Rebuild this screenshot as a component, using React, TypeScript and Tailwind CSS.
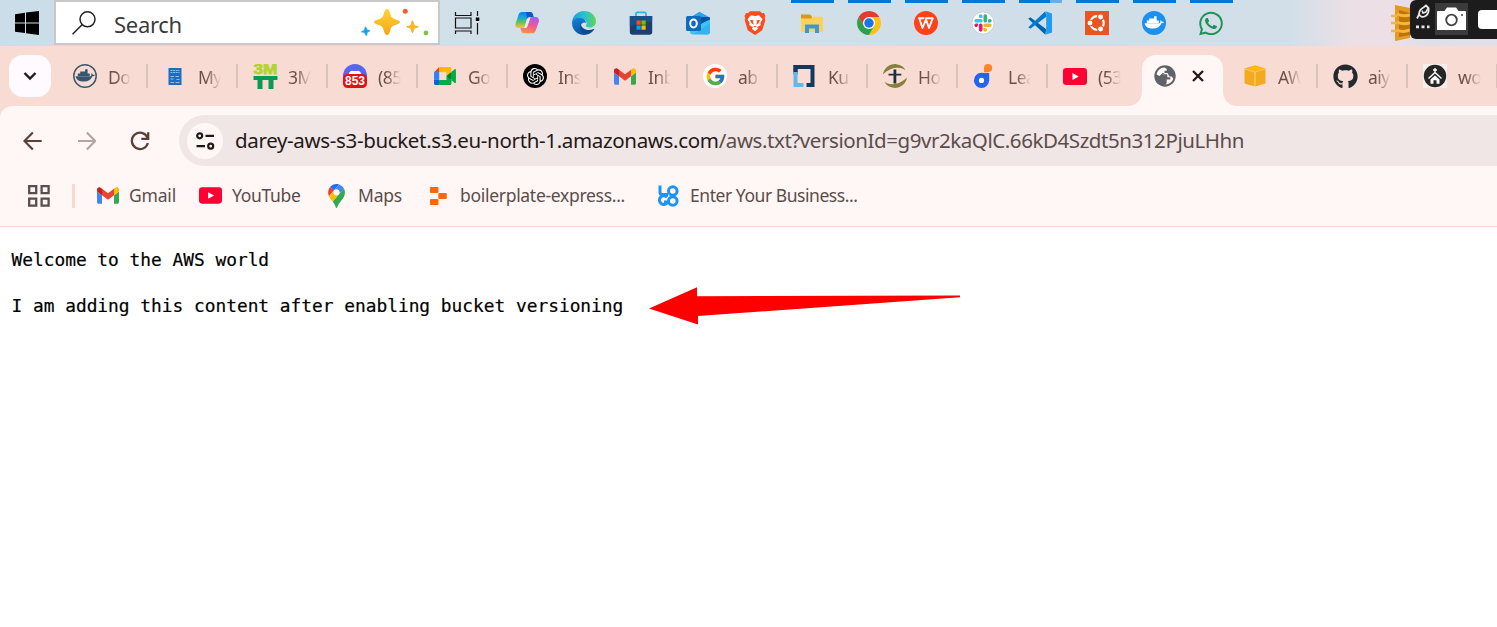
import React from "react";
import type { ReactNode } from "react";
import { FcGoogle } from "react-icons/fc";
import { FaGithub, FaWhatsapp } from "react-icons/fa";
import { SiOpenai } from "react-icons/si";

/* ---------- shared brand drawings ---------- */

function Gmail({ className }: { className: string }) {
  return (
    <svg viewBox="52 42 88 66" className={className}>
      <path fill="#4285f4" d="M58 108h14V74L52 59v43c0 3.32 2.69 6 6 6" />
      <path fill="#34a853" d="M120 108h14c3.32 0 6-2.69 6-6V59l-20 15" />
      <path fill="#fbbc04" d="M120 48v26l20-15v-8c0-7.42-8.47-11.65-14.4-7.2" />
      <path fill="#ea4335" d="M72 74V48l24 18 24-18v26L96 92" />
      <path fill="#c5221f" d="M52 51v8l20 15V48l-5.6-4.2c-5.94-4.45-14.4-.22-14.4 7.2" />
    </svg>
  );
}

function YouTube({ className }: { className: string }) {
  return (
    <svg viewBox="0 0 24 17" className={className}>
      <rect width="24" height="17" rx="3.2" fill="#ff0033" />
      <path d="M9.5 5v7l6.2-3.5z" fill="#fff" />
    </svg>
  );
}

function Whale({ fill }: { fill: string }) {
  return (
    <g fill={fill}>
      <path d="M2.600 12.200h15.200c.6-.3.7-1.6.2-2.6 1-.4 1.700.4 1.900 1.100.7-.1 1.400 0 2 .3-.4.800-1.300 1.300-2.500 1.300-1.300 3.400-4.200 5.300-8.300 5.300-4.900 0-7.900-1.800-8.500-5.400z" />
      <path d="M4.800 9.400h12v2.600h-12zM7.200 7.400h7.400v2.100H7.200zM12.100 5.300h2.500v2.200h-2.500z" />
    </g>
  );
}

/* ---------- taskbar icons ---------- */

const TaskView = () => (
  <svg viewBox="0 0 26 24" className="h-6 w-[26px]" fill="none" stroke="#111" strokeWidth="1.2">
    <path d="M1.500 1v3.500h15.500V1M1.500 7h15.500v10h-15.500zM1.500 23v-3h15.500v3M23.500 0v5M23.500 12v11.500" />
    <rect x="21.800" y="6.500" width="3.500" height="3.500" fill="#000" stroke="none" />
  </svg>
);

const Copilot = () => (
  <svg viewBox="0 0 24 24" className="h-6 w-6">
    <defs>
      <linearGradient id="cpA" x1="0.3" y1="0" x2="0.3" y2="1">
        <stop offset="0" stopColor="#0b7fe8" />
        <stop offset=".35" stopColor="#16a9d9" />
        <stop offset=".65" stopColor="#6fbf55" />
        <stop offset="1" stopColor="#f4c92d" />
      </linearGradient>
      <linearGradient id="cpB" x1="0.7" y1="0" x2="0.4" y2="1">
        <stop offset="0" stopColor="#a45cf0" />
        <stop offset=".5" stopColor="#ee5796" />
        <stop offset="1" stopColor="#fb9045" />
      </linearGradient>
    </defs>
    <path fill="url(#cpA)" d="M7 1h8c2 0 2.500 1 3 3l.6 2H15c-2 0-3 1-3.500 3l-1.600 6c-.5 1.500-1.200 2-2.500 2H3.500C.5 17 0 14.500.8 12L3.500 3.800C4.200 1.800 5 1 7 1z" />
    <path fill="#1755c4" d="M11 1h4c2 0 2.500 1 3 3l.6 2H15c-2 0-2.600 1-3 2z" />
    <path fill="url(#cpB)" d="M17 22.300H9c-2 0-2.500-1-3-3l-.7-2.300h3c2 0 2.700-1 3.200-3l1.700-6c.5-1.500 1.200-2 2.500-2h4.800c3 0 4 2.500 3.200 5l-3 8.500c-.7 2-1.700 2.800-3.700 2.800z" />
    <path fill="#e4edf2" d="M12.300 8.700c.8-1.900 1.900-2.600 3.400-2.600l-3.400 9.700c-.7 1.200-1.800 1.500-3.100 1.300z" />
  </svg>
);

const Edge = () => (
  <svg viewBox="0 0 24 24" className="h-6 w-6">
    <defs>
      <linearGradient id="edA" x1="0" y1="0.3" x2="1" y2="0.3">
        <stop offset="0" stopColor="#1b9de2" />
        <stop offset=".55" stopColor="#2cc3c9" />
        <stop offset="1" stopColor="#62d64c" />
      </linearGradient>
      <linearGradient id="edB" x1="0" y1="0" x2="0.3" y2="1">
        <stop offset="0" stopColor="#1583d8" />
        <stop offset="1" stopColor="#0c55a6" />
      </linearGradient>
    </defs>
    <path fill="url(#edA)" d="M0 11.500C.3 5 5.500 0 12 0c7 0 12 5 12 10.200 0 4-3 6.300-6.400 6.300-2.800 0-4.200-1-3.600-1.900 1.500-2 .8-6.600-5-6.600C4.500 8 1 9.500 0 11.500z" />
    <path fill="url(#edB)" d="M0 12c0-3 3.500-5 7-5 4.500 0 7 2.300 7 5-3-1.400-6 1.200-5.200 5 .6 2.800 2.700 5.500 5.700 6.700C6.700 25.200 0 19.600 0 12z" />
    <path fill="#0b4a8c" d="M8.800 12.500c-2.300 5 1 10.500 6 11.100 3-.5 5.700-2.300 7.400-5 .3-.6-.2-.8-.6-.6-6 2.800-12.600-.2-12.800-5.500z" />
  </svg>
);

const Store = () => (
  <svg viewBox="0 0 24 24" className="h-6 w-6">
    <path d="M7 6V2.800C7 1.600 7.500 1.300 8.400 1.300h7.200c.9 0 1.400.4 1.400 1.500V6" fill="none" stroke="#25b9ee" strokeWidth="1.800" />
    <path d="M.8 5h22.400v16c0 1.700-1 2.700-2.700 2.700h-17C1.800 23.700.8 22.700.8 21z" fill="#1d3f6e" />
    <path d="M.8 5h22.400v5L.8 15z" fill="#17568e" opacity=".8" />
    <path fill="#f25022" d="M7.500 9.500h4.200v4.200H7.500z" />
    <path fill="#7fba00" d="M12.500 9.500h4.200v4.200h-4.200z" />
    <path fill="#00a4ef" d="M7.500 14.500h4.200v4.200H7.500z" />
    <path fill="#ffb900" d="M12.500 14.500h4.200v4.200h-4.200z" />
  </svg>
);

const Outlook = () => (
  <svg viewBox="0 0 24 24" className="h-6 w-6">
    <path d="M5 6l8.500-5L23.500 6.500V14H5z" fill="#1b7fd6" />
    <path d="M8 4.500L13.500 1l8 4.500L14 12z" fill="#2aa4ea" />
    <path d="M12 14l12-8v9z" fill="#0a4a9e" />
    <path d="M4 15l9-1.500L24 8.500V21c0 1.500-1 2.500-2.500 2.500H7c-2 0-3-1-3-2.500z" fill="#38c6f4" />
    <path d="M15 6h8l-9 8z" fill="#0c4ea5" />
    <path d="M8 23l16-11v9c0 1.500-1 2.500-2.500 2.500z" fill="#33b4f0" />
    <rect x="0" y="5" width="15" height="15" rx="1.500" fill="#0f6cbd" />
    <ellipse cx="7.500" cy="12.500" rx="3.300" ry="3.900" fill="none" stroke="#fff" strokeWidth="2" />
  </svg>
);

const Explorer = () => (
  <svg viewBox="0 0 24 24" className="h-6 w-6">
    <path d="M1 3.500h9l2 2V9H1z" fill="#dc9a10" />
    <path d="M1 7.500h10l2-1.700h10V21H1z" fill="#fbd15b" />
    <path d="M5 22v-8.500h14V22h-4v-4.500H9V22z" fill="#3c97d6" />
  </svg>
);

const Chrome = () => (
  <svg viewBox="0 0 48 48" className="h-6 w-6">
    <path fill="#e23b30" d="M24 12H44.780A24 24 0 0 0 3.220 12L13.610 30L24 24Z" />
    <path fill="#fbc116" d="M34.390 30L24 48A24 24 0 0 0 44.780 12H24V24Z" />
    <path fill="#2da14c" d="M13.610 30L3.220 12A24 24 0 0 0 24 48L34.390 30L24 24Z" />
    <circle cx="24" cy="24" r="12" fill="#fff" />
    <circle cx="24" cy="24" r="9.500" fill="#1a73e8" />
  </svg>
);

const Wps = () => (
  <svg viewBox="0 0 24 24" className="h-6 w-6">
    <circle cx="12" cy="12" r="12" fill="#ff4218" />
    <path d="M4.300 7.300h6M5.300 7.300l3.200 9.700 3.500-8.500 3 8.500 3.700-9.700h-7.400" fill="none" stroke="#fff" strokeWidth="1.900" strokeLinejoin="round" />
  </svg>
);

const slackArm =
  "M25.800 77.600c0 7.100-5.800 12.900-12.900 12.900S0 84.700 0 77.600s5.800-12.900 12.900-12.900h12.900v12.900zm6.500 0c0-7.100 5.800-12.900 12.900-12.900s12.900 5.800 12.900 12.900v32.300c0 7.100-5.800 12.900-12.900 12.900s-12.900-5.800-12.900-12.900V77.600z";

const Slack = () => (
  <svg viewBox="-24 -24 170.800 170.800" className="h-6 w-6">
    <circle cx="61.400" cy="61.400" r="79" fill="#fff" stroke="#b9c3c9" strokeWidth="5" />
    <path fill="#e01e5a" d={slackArm} />
    <path fill="#36c5f0" d={slackArm} transform="rotate(90 61.400 61.400)" />
    <path fill="#2eb67d" d={slackArm} transform="rotate(180 61.400 61.400)" />
    <path fill="#ecb22e" d={slackArm} transform="rotate(270 61.400 61.400)" />
  </svg>
);

const VsCode = () => (
  <svg viewBox="0 0 24 24" className="h-6 w-6">
    <path d="M.3 7.800l2-1.500 16 12-1 5.500z" fill="#0065a9" />
    <path d="M.3 16.200l2 1.500L18.500 5.500 17.300.2z" fill="#007acc" />
    <path d="M17.300.2L24 2.600v18.800l-6.700 2.400c.5-.3.900-.8.900-1.500V1.700c0-.7-.4-1.200-.9-1.500z" fill="#1f9cf0" />
  </svg>
);

const Ubuntu = () => (
  <svg viewBox="0 0 24 24" className="h-6 w-6">
    <path d="M0 0h24v24H0z" fill="#e95420" />
    <circle cx="12" cy="12" r="6.800" fill="none" stroke="#fff" strokeWidth="2.200" />
    <g fill="#fff" stroke="#e95420" strokeWidth="1.100">
      <circle cx="5" cy="12" r="3" />
      <circle cx="15.600" cy="6" r="3" />
      <circle cx="15.600" cy="18" r="3" />
    </g>
  </svg>
);

const DockerApp = () => (
  <svg viewBox="0 0 24 24" className="h-6 w-6">
    <circle cx="12" cy="12" r="12" fill="#1d90ed" />
    <Whale fill="#fff" />
  </svg>
);

const Brave = () => (
  <svg viewBox="0 0 24 24" className="h-6 w-6">
    <path fill="#ff4a1c" d="M7 .3h10l2 2 2-.2 1.500 3-.8 2 .6 2-3 10.200L12 24l-7.300-4.700-3-10.200.6-2-.8-2L3 2.100l2 .2z" />
    <path fill="#fff" d="M8 4.300l4 .8 4-.8 3.500 4-2.200 4 .5 1.800-3.700 2.200 1 1.500-3.100 2.400-3.100-2.400 1-1.500-3.700-2.200.5-1.800-2.200-4z" />
    <path fill="#ff4a1c" d="M7 8.700l3.600.7-.6 1.600.8 2.800-2.300-1.500zM17 8.700l-3.600.7.6 1.600-.8 2.800 2.300-1.500zM10 15h4l-2 1.300z" />
  </svg>
);

type TaskItem = { icon: ReactNode; bar?: "solid" | "split" };

const taskItems: TaskItem[] = [
  { icon: <Copilot /> },
  { icon: <Edge /> },
  { icon: <Store /> },
  { icon: <Outlook /> },
  { icon: <Brave /> },
  { icon: <Explorer />, bar: "solid" },
  { icon: <Chrome />, bar: "solid" },
  { icon: <Wps />, bar: "solid" },
  { icon: <Slack />, bar: "solid" },
  { icon: <VsCode />, bar: "split" },
  { icon: <Ubuntu />, bar: "solid" },
  { icon: <DockerApp />, bar: "solid" },
  { icon: <FaWhatsapp className="size-[27px] text-[#1f9257]" />, bar: "solid" },
];

function Taskbar() {
  return (
    <div className="flex h-[46px] bg-[linear-gradient(90deg,#cbdde8_0px,#d2e0e8_500px,#cfdee8_1000px,#d2dfe9_1290px,#ecdfe6_1350px,#ecdfe6_1390px,#dfdfea_1430px,#e3dfe9_1497px)]">
      <div className="flex w-[54px] shrink-0 items-center">
        <svg viewBox="0 0 24 24" className="ml-[15px] h-6 w-6">
          <path d="M0 3.300l10-1.500v9.600H0zM11 1.600L24 0v11.400H11zM0 12.500h10v9.600L0 20.700zM11 12.500h13V24l-13-1.700z" fill="#000" />
        </svg>
      </div>
      <div className="flex h-[45px] w-[386px] shrink-0 items-center border-2 border-[#c9c9c9] bg-white">
        <svg viewBox="0 0 24 24" className="ml-4 h-6 w-6" fill="none" stroke="#222" strokeWidth="1.500">
          <circle cx="15.500" cy="8.300" r="7.500" />
          <path d="M10 13.700L.5 23.300" />
        </svg>
        <span className="ml-[18px] mt-[3px] w-[246px] text-[22px] tracking-[-0.300px] text-[#3b3b3b]">Search</span>
        <svg viewBox="0 0 70 28" className="-mt-[2px] h-7 w-[70px]">
          <defs>
            <linearGradient id="star" x1="0" y1="0" x2="0" y2="1">
              <stop offset="0" stopColor="#ffd43a" />
              <stop offset="1" stopColor="#f3a712" />
            </linearGradient>
          </defs>
          <path d="M27 1c1.500 0 2.500 1.500 3.200 4.500.8 3.400 1.800 4.700 4.900 5.700 3.600 1.100 5 1.800 5 2.900s-1.400 1.800-5 2.900c-3.100 1-4.100 2.200-4.900 5.600C29.500 25.600 28.500 27 27 27s-2.500-1.400-3.200-4.400c-.8-3.400-1.800-4.600-4.900-5.600-3.600-1.100-5-1.800-5-2.900s1.400-1.800 5-2.900c3.100-1 4.100-2.300 4.900-5.700C24.500 2.500 25.500 1 27 1z" fill="url(#star)" />
          <path d="M52.500 12.300c1 0 1.500 4 2.200 4.700s4.200 1 4.200 1.800-3.500 1.200-4.200 1.900-1.200 4.300-2.200 4.300-1.500-3.600-2.200-4.300-4.200-1.100-4.200-1.900 3.500-1.100 4.200-1.800 1.200-4.700 2.200-4.700z" fill="#f8b72b" />
          <path d="M5.500 19c1-.3 1.300 2.600 2 3s2.500-.2 2.500.7-2.200 1-2.600 1.700-.2 3.200-1 3.300-1.300-2.500-2-3-2.900.1-3-.8 2.300-1 2.800-1.700.4-3 1.300-3.200z" fill="#16a3e8" stroke="#16a3e8" strokeWidth=".5" />
          <circle cx="45.300" cy="3.200" r="2.500" fill="#f0622d" />
          <circle cx="66" cy="25" r="2.400" fill="#84c341" />
        </svg>
      </div>
      <div className="flex w-[58px] shrink-0 items-center pl-[14px]">
        <TaskView />
      </div>
      {taskItems.map((item, i) => (
        <div key={i} className="flex w-[57px] shrink-0 flex-col items-center">
          <div className="ml-px flex h-[3px] w-[43px]">
            {item.bar === "solid" && <div className="w-full bg-[#0078d7]" />}
            {item.bar === "split" && (
              <>
                <div className="w-[31px] bg-[#0078d7]" />
                <div className="w-3 bg-[#6aaee8]" />
              </>
            )}
          </div>
          <div className="mt-[7px] flex h-[26px] w-6 items-center justify-center">{item.icon}</div>
        </div>
      ))}
      <div className="flex w-[258px] shrink-0 justify-end">
        <svg viewBox="0 0 20 36" className="mt-[5px] h-9 w-5">
          <path d="M5 0l15 3v30L5 36z" fill="#e79a22" />
          <path d="M9 5l11 3v22L9 32z" fill="#bd7409" />
          <path d="M1 11h6M1 18h6M1 26h6" stroke="#efb743" strokeWidth="2.500" />
          <path d="M7 9q6 3 13 1M7 17q6 3 13 1M7 25q6 3 13 0" fill="none" stroke="#f3b839" strokeWidth="3" />
        </svg>
        <div className="flex h-[39px] w-[87px] shrink-0 rounded-l-md bg-[#1c1c1c]">
          <svg viewBox="0 0 20 28" className="ml-[5px] mt-[3px] h-7 w-5" fill="none" stroke="#e8e8e8">
            <path d="M2 15.500l2.500-5" strokeWidth="1.800" />
            <path d="M11 2.500l2.500 2.500c1 3-.5 7-4 8.500-2 .8-4.500 0-5.300-2C3.500 8.500 6 5.500 8.500 4.500z" strokeWidth="1.800" />
            <path d="M7 7.500l1 2.500 3-1 2.500-4.500" strokeWidth="1.600" />
            <path d="M1 23.800h3M6.500 23.800h3M12 23.800h2.500" strokeWidth="2.800" />
          </svg>
          <div className="mt-[3px] flex h-8 w-[33px] items-center justify-center bg-[#3b3b3b]">
            <svg viewBox="0 0 29 24" className="h-6 w-[29px]">
              <path d="M1 4h6.500l2.500-3.500h9L21.500 4H28a1 1 0 011 1v18H0V5a1 1 0 011-1z" fill="#fff" />
              <circle cx="14.500" cy="13" r="5.300" fill="none" stroke="#444" strokeWidth="1.800" />
              <circle cx="25" cy="8" r="1" fill="#444" />
            </svg>
          </div>
          <div className="ml-[10px] mt-[10px] h-[19px] w-[19px] rounded-l-sm bg-white" />
        </div>
      </div>
    </div>
  );
}

/* ---------- tab favicons ---------- */

const DockerTab = () => (
  <svg viewBox="0 0 24 24" className="h-6 w-6">
    <circle cx="12" cy="12" r="11.200" fill="none" stroke="#3d586b" strokeWidth="1.500" />
    <Whale fill="#35566f" />
  </svg>
);

const BlueDoc = () => (
  <svg viewBox="0 0 24 24" className="h-6 w-6">
    <path d="M5.500 4h13v17h-13z" fill="#1f6dbf" />
    <path d="M7.500 6.500h9M7.500 8.500h9" stroke="#8cc0ec" strokeWidth="1.200" strokeDasharray="2 .6" />
    <path d="M7.500 12.500h3.500M7.500 15h3M7.500 18.500h3.500M12.500 12.500h3.500M13.500 15.500h3M12.500 18.500h4" stroke="#8cc0ec" strokeWidth="1" />
  </svg>
);

const ThreeM = () => (
  <svg viewBox="0 0 25 25" className="h-[25px] w-[25px]">
    <text x="12.500" y="10.300" textAnchor="middle" textLength="24" lengthAdjust="spacingAndGlyphs" fontSize="14" fontWeight="900" fontFamily="Liberation Sans, sans-serif" fill="#b4d334" stroke="#b4d334" strokeWidth=".8">
      3M
    </text>
    <path d="M.5 12h24v4h-4v9h-5v-9h-6v9h-5v-9h-4z" fill="#0b9b50" />
  </svg>
);

const Notify853 = () => (
  <svg viewBox="0 0 26 26" className="h-[26px] w-[26px]">
    <circle cx="13" cy="13" r="12" fill="#5865f2" />
    <path d="M7 10q2-3 4-2h4q2-1 4 2v4H7z" fill="#fff" />
    <rect x="1" y="11" width="24" height="14" rx="4.500" fill="#e60f16" />
    <text x="13" y="22.300" textAnchor="middle" fontSize="12" fontWeight="700" fontFamily="Liberation Sans, sans-serif" fill="#fff">
      853
    </text>
  </svg>
);

const Meet = () => (
  <svg viewBox="0 0 87.500 72" className="h-[18px] w-[22px]">
    <path fill="#00832d" d="M49.500 36l8.530 9.750 11.470 7.330 2-17.020-2-16.640-11.690 6.440z" />
    <path fill="#0066da" d="M0 51.500V66c0 3.315 2.685 6 6 6h14.500l3-10.960-3-9.540-9.950-3z" />
    <path fill="#e94235" d="M20.500 0L0 20.500l10.550 3 9.950-3 2.950-9.410z" />
    <path fill="#2684fc" d="M20.500 20.500H0v31h20.500z" />
    <path fill="#00ac47" d="M82.600 8.680L69.500 19.420v33.660l13.160 10.790c1.970 1.540 4.850.135 4.850-2.370V11c0-2.535-2.945-3.925-4.910-2.320zM49.500 36v15.500h-29V72h43c3.315 0 6-2.685 6-6V53.080z" />
    <path fill="#ffba00" d="M63.500 0h-43v20.500h29V36l20-16.570V6c0-3.315-2.685-6-6-6z" />
  </svg>
);

const OpenAi = () => (
  <span className="flex size-6 items-center justify-center rounded-full bg-black">
    <SiOpenai className="size-[17px] text-white" />
  </span>
);

const GoogleTab = () => (
  <span className="flex size-6 items-center justify-center rounded-full bg-white">
    <FcGoogle className="size-[21px]" />
  </span>
);

const LinuxFoundation = () => (
  <svg viewBox="0 0 24 24" className="h-6 w-6">
    <path d="M.5 1h21v22h-8v-4h4V5h-13v5.500h-4z" fill="#123a60" />
    <path d="M.5 8h4v11h6v4H.5z" fill="#62b8ea" />
    <path d="M.5 1h10v4h-6v3h-4z" fill="#123a60" />
  </svg>
);

const Cross = () => (
  <svg viewBox="0 0 26 26" className="h-[26px] w-[26px]">
    <path d="M1 11.500C2 4.500 8.500.5 14.500 1.200c4.500.5 7.500 3 9 6C19.500 3.800 9.500 3 1 11.500z" fill="#85803b" />
    <path d="M25 14.500c-1 7-7.500 11-13.500 10.300-4.500-.5-7.500-3-9-6 4 3.400 14 4.200 22.500-4.300z" fill="#85803b" />
    <path d="M11.500 6.500h2.800v4.300h5v1.700h-5V20.500h-2.800v-8h-5v-1.700h5z" fill="#1f2d3f" />
  </svg>
);

const Drop = () => (
  <svg viewBox="0 0 24 24" className="h-6 w-6">
    <path d="M8.500 9h7.700v7.500H8.500z" fill="#2563f5" />
    <circle cx="8.500" cy="16.400" r="7.600" fill="#2563f5" />
    <circle cx="8.500" cy="16.400" r="2.600" fill="#fff" />
    <path d="M11 8.200V4.100a4.100 4.100 0 1 1 4.100 4.100z" fill="#ff8328" />
  </svg>
);

const Globe = () => (
  <svg viewBox="0 0 22 22" className="size-[22px]">
    <circle cx="11" cy="11" r="10.700" fill="#5f6368" />
    <path d="M2.600 9.500C3.300 5.500 6.500 2.700 10.500 2.500L12.700 4v1.800h-2.200v2.400L8.300 9.300h5v3h3v2.300h-3.600v3.300l-1.300 1.600c3.700-.1 6.700-2.400 7.900-5.700l-1.500-2.300h-2.300l-2-3.500h-5l-3 3z" fill="#fff7f5" />
  </svg>
);

const AwsCube = () => (
  <svg viewBox="0 0 24 24" className="h-6 w-6">
    <path d="M1.500 4.500L12 1.500l10.500 3v15L12 22.500l-10.500-3z" fill="#f4aa20" />
    <path d="M1.500 4.500L12 7.500l10.500-3L12 1.500z" fill="#fdb813" />
    <path d="M12 8v14.500" fill="none" stroke="#fbd87a" strokeWidth="1" />
    <path d="M1.500 5L12 8l10.500-3" fill="none" stroke="#fbd87a" strokeWidth=".7" />
  </svg>
);

const Church = () => (
  <svg viewBox="0 0 24 24" className="h-6 w-6">
    <path d="M0 0h24v24H0z" fill="#f4efed" />
    <circle cx="12" cy="12" r="11.200" fill="#262626" />
    <path d="M12 4v5M10 6h4M5.500 14.500l6.500-6 6.500 6" fill="none" stroke="#fff" strokeWidth="1.400" />
    <path d="M7.500 15.500L12 11.500l4.500 4v4.300h-3v-3.500h-3v3.500h-3z" fill="#fff" />
  </svg>
);

type TabItem = { icon: ReactNode; label: string };

const leftTabs: TabItem[] = [
  { icon: <DockerTab />, label: "Do" },
  { icon: <BlueDoc />, label: "My" },
  { icon: <ThreeM />, label: "3M" },
  { icon: <Notify853 />, label: "(85" },
  { icon: <Meet />, label: "Go" },
  { icon: <OpenAi />, label: "Ins" },
  { icon: <Gmail className="h-[17px] w-[22px]" />, label: "Inb" },
  { icon: <GoogleTab />, label: "ab" },
  { icon: <LinuxFoundation />, label: "Ku" },
  { icon: <Cross />, label: "Ho" },
  { icon: <Drop />, label: "Lea" },
  { icon: <YouTube className="h-[17px] w-6" />, label: "(53" },
];

const rightTabs: TabItem[] = [
  { icon: <AwsCube />, label: "AW" },
  { icon: <FaGithub className="size-[25px] text-[#24292f]" />, label: "aiy" },
  { icon: <Church />, label: "wo" },
];

function Tab({ item, divider }: { item: TabItem; divider: boolean }) {
  return (
    <div className="flex h-[60px] w-[90px] shrink-0 items-center">
      <div className="ml-[14px] flex w-[26px] shrink-0 items-center justify-center">{item.icon}</div>
      <div className="ml-[10px] mt-[3px] w-[32px] shrink-0 whitespace-nowrap text-[17.500px] tracking-[-0.500px] text-[#6b4f49] [mask-image:linear-gradient(90deg,#000_8px,transparent_23px)]">
        {item.label}
      </div>
      {divider && <div className="ml-[6px] h-6 w-0.5 shrink-0 bg-[#d8c3bd]" />}
    </div>
  );
}

function TabStrip() {
  return (
    <div className="flex h-[60px] overflow-hidden bg-[#f8dcd3]">
      <div className="w-[58px] shrink-0 pl-[9px] pt-[9px]">
        <div className="flex size-[42px] items-center justify-center rounded-[14px] bg-[#fffaff]">
          <svg viewBox="0 0 14 10" className="h-[10px] w-[14px]" fill="none" stroke="#231918" strokeWidth="2.400">
            <path d="M1.500 2L7 7.500 12.500 2" />
          </svg>
        </div>
      </div>
      {leftTabs.map((t, i) => (
        <Tab key={t.label} item={t} divider={i < 11} />
      ))}
      <div className="flex w-[90px] shrink-0 items-end">
        <svg viewBox="0 0 14 14" className="-ml-[10px] h-[14px] w-[14px] shrink-0">
          <path d="M14 0v14H0A14 14 0 0 0 14 0z" fill="#fff7f5" />
        </svg>
        <div className="flex h-[51px] w-[81px] shrink-0 items-start rounded-t-[14px] bg-[#fff7f5] pt-[10px]">
          <div className="ml-3">
            <Globe />
          </div>
          <svg viewBox="0 0 14 14" className="ml-[15px] mt-1 h-[14px] w-[14px]" stroke="#231918" strokeWidth="2.300">
            <path d="M2 2l10 10M12 2L2 12" />
          </svg>
        </div>
        <svg viewBox="0 0 14 14" className="-mr-[10px] h-[14px] w-[14px] shrink-0">
          <path d="M0 0v14h14A14 14 0 0 1 0 0z" fill="#fff7f5" />
        </svg>
      </div>
      {rightTabs.map((t) => (
        <Tab key={t.label} item={t} divider />
      ))}
    </div>
  );
}

/* ---------- toolbar, bookmarks, page ---------- */

function Toolbar() {
  return (
    <div className="bg-[#f8dcd3]">
      <div className="flex h-[69px] items-center rounded-tl-[12px] bg-[#fff7f5]">
        <svg viewBox="0 0 20 20" className="ml-[23px] size-5" fill="none" stroke="#5b403a" strokeWidth="2.200">
          <path d="M19 10H2M10 1.300L1.500 10l8.500 8.700" />
        </svg>
        <svg viewBox="0 0 20 20" className="ml-[34px] size-5" fill="none" stroke="#b5a5a2" strokeWidth="2.200">
          <path d="M1 10h17M10 1.300l8.500 8.700-8.500 8.700" />
        </svg>
        <svg viewBox="0 0 20 20" className="ml-[34px] size-5" fill="none" stroke="#5b403a" strokeWidth="2.300">
          <path d="M17.800 6.500A8.300 8.300 0 1 0 18.200 12M18.500 1v6.800h-7" />
        </svg>
        <div className="ml-[29px] flex h-[51px] w-[1340px] items-center overflow-hidden rounded-l-full bg-[#f1e6e6] pl-2">
          <div className="flex size-9 shrink-0 items-center justify-center rounded-full bg-[#fff7f5]">
            <svg viewBox="0 0 20 18" className="h-[18px] w-5" fill="none" stroke="#231918" strokeWidth="2.200">
              <circle cx="4.700" cy="3.800" r="2.500" />
              <path d="M10.500 3.800h8.500M1.500 14.200h8.500" />
              <circle cx="15.700" cy="14.200" r="2.500" />
            </svg>
          </div>
          <div className="ml-3 whitespace-nowrap text-[20.500px] text-[#5b4d4b]">
            <span className="tracking-[-0.340px] text-[#231918]">darey-aws-s3-bucket.s3.eu-north-1.amazonaws.com</span>
            <span className="tracking-[-0.430px]">/aws.txt?versionId=g9vr2kaQlC.66kD4Szdt5n312PjuLHhn</span>
          </div>
        </div>
      </div>
    </div>
  );
}

function Bookmark({ icon, label, className }: { icon: ReactNode; label: string; className: string }) {
  return (
    <div className={`flex shrink-0 items-center whitespace-nowrap text-[17.500px] text-[#5b4d4b] ${className}`}>
      {icon}
      <span>{label}</span>
    </div>
  );
}

function Bookmarks() {
  return (
    <div className="flex h-[52px] items-center border-b border-[#f8dcd3] bg-[#fff7f5] pb-[10px]">
      <svg viewBox="0 0 22 22" className="ml-7 size-[22px]" fill="none" stroke="#5b4d4b" strokeWidth="2.300">
        <path d="M1.200 1.200h7v7h-7zM13.600 1.200h7v7h-7zM1.200 13.600h7v7h-7zM13.600 13.600h7v7h-7z" />
      </svg>
      <div className="ml-[22px] h-6 w-[3px] bg-[#fcd8ce]" />
      <Bookmark className="ml-[22px] w-[102px] gap-[10px] tracking-[-0.200px]" icon={<Gmail className="h-[17px] w-[22px]" />} label="Gmail" />
      <Bookmark className="w-[129px] gap-[10px] tracking-[-0.300px]" icon={<YouTube className="h-[17px] w-[23px]" />} label="YouTube" />
      <Bookmark
        className="w-[102px] gap-[13px] tracking-[-0.200px]"
        icon={
          <svg viewBox="0 0 92.300 132.300" className="h-6 w-[17px]">
            <path fill="#1a73e8" d="M60.200 2.200C55.800.8 51 0 46.100 0 32 0 19.300 6.400 10.800 16.500l21.800 18.300L60.200 2.200z" />
            <path fill="#ea4335" d="M10.800 16.500C4.100 24.500 0 34.900 0 46.100c0 8.700 1.700 15.700 4.600 22l28-33.300-21.800-18.300z" />
            <path fill="#4285f4" d="M46.200 28.500c9.800 0 17.700 7.900 17.700 17.700 0 4.300-1.600 8.300-4.200 11.400 0 0 13.900-16.600 27.500-32.700-5.600-10.800-15.300-19-27-22.700L32.600 34.800c3.300-3.800 8.100-6.300 13.600-6.300" />
            <path fill="#fbbc04" d="M46.200 63.800c-9.800 0-17.700-7.900-17.700-17.700 0-4.300 1.500-8.300 4.100-11.300l-28 33.300c4.800 10.600 12.800 19.200 21 29.900l34.100-40.500c-3.300 3.900-8.100 6.300-13.500 6.300" />
            <path fill="#34a853" d="M59.100 109.200c15.400-24.100 33.300-35 33.300-63 0-7.700-1.900-14.900-5.200-21.300L25.600 98c2.600 3.400 5.300 7.300 7.900 11.300 9.400 14.500 6.800 23.100 12.800 23.100s3.400-8.700 12.800-23.200" />
          </svg>
        }
        label="Maps"
      />
      <Bookmark
        className="w-[228px] gap-[13px] tracking-[-0.300px]"
        icon={
          <svg viewBox="0 0 17 18" className="h-[18px] w-[17px]" fill="#fb660b">
            <rect width="8.500" height="5.900" rx="1" />
            <rect x="8.300" y="6" width="8.500" height="5.900" rx="1" />
            <rect y="12" width="8.500" height="5.900" rx="1" />
          </svg>
        }
        label="boilerplate-express..."
      />
      <Bookmark
        className="gap-[11px] tracking-[-0.450px]"
        icon={
          <svg viewBox="0 0 21 22" className="h-[22px] w-[21px]" fill="none" stroke="#1c93f7" strokeWidth="3">
            <path d="M2 .5v7q0 2 2 2h6" />
            <circle cx="14.800" cy="6" r="4.300" />
            <path d="M9 12.300A4.300 4.300 0 1 0 9.600 17H6" />
            <circle cx="14.800" cy="16" r="4.300" />
          </svg>
        }
        label="Enter Your Business..."
      />
    </div>
  );
}

export default function App() {
  return (
    <div className="flex h-[627px] w-[1497px] flex-col overflow-hidden bg-white font-['Noto_Sans','Open_Sans',sans-serif]">
      <Taskbar />
      <TabStrip />
      <Toolbar />
      <Bookmarks />
      <div className="flex pl-[11.500px] pt-[21px] font-['DejaVu_Sans_Mono','Liberation_Mono',monospace] text-[17.830px] leading-[23px] text-black">
        <pre className="w-[637px] font-[inherit] [-webkit-text-stroke:0.200px_#000]">{"Welcome to the AWS world\n\nI am adding this content after enabling bucket versioning"}</pre>
        <svg viewBox="0 0 312 38" className="mt-[39px] h-[38px] w-[312px]" fill="#f00">
          <path d="M0 21.500L48 .3V9.300L311 8.500V10.300L49 29v8.500z" />
        </svg>
      </div>
    </div>
  );
}
